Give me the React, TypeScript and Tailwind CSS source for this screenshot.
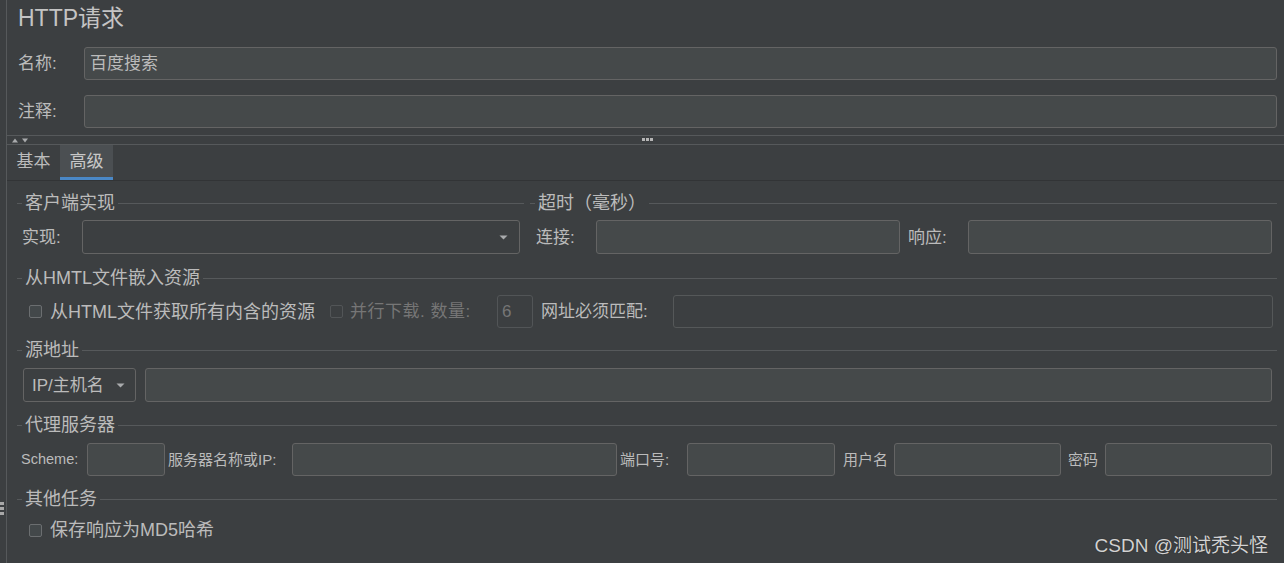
import React from "react";

const FONT = "font-['Liberation_Sans','Noto_Sans_CJK_SC',sans-serif]";

function Field({ className = "" }: { className?: string }) {
  return <div className={"h-full rounded-[3px] border border-[#646464] bg-[#45494a] " + className} />;
}

function Arrow() {
  return (
    <svg width="9" height="5" viewBox="0 0 9 5" className="shrink-0">
      <path d="M0.5 0.5 L8.5 0.5 L4.5 4.5 Z" fill="#a9abad" />
    </svg>
  );
}

function Check({ disabled = false }: { disabled?: boolean }) {
  return (
    <div
      className={
        disabled
          ? "h-[13px] w-[13px] shrink-0 rounded-[2px] border border-[#525557] bg-[#3c3f41]"
          : "h-[13px] w-[13px] shrink-0 rounded-[2px] border border-[#6b6e70] bg-[#43484a]"
      }
    />
  );
}

function Header({ title }: { title: string }) {
  return (
    <div className="flex h-[20px] items-center">
      <div className="h-px w-[5px] bg-[#56595b]" />
      <span className="px-[3px] text-[18px] leading-none text-[#bbbbbb]">{title}</span>
      <div className="h-px flex-1 bg-[#56595b]" />
    </div>
  );
}

export default function App() {
  return (
    <div className={"relative flex h-[563px] w-full overflow-hidden bg-[#3c3f41] text-[#bbbbbb] " + FONT}>
      {/* left strip */}
      <div className="relative w-[6px] shrink-0">
        <div className="absolute left-0 top-[502px] flex flex-col gap-[2px]">
          <div className="h-[3px] w-[4px] bg-[#a8a8a8]" />
          <div className="h-[3px] w-[4px] bg-[#a8a8a8]" />
          <div className="h-[3px] w-[4px] bg-[#a8a8a8]" />
        </div>
      </div>
      <div className="w-px shrink-0 bg-[#56595b]" />

      {/* main */}
      <div className="flex min-w-0 flex-1 flex-col">
        <div className="flex h-[36px] items-center pl-[11px] text-[23px] leading-none text-[#c4c4c4]">HTTP请求</div>

        <div className="mt-[11px] flex h-[33px] items-center pl-[11px] pr-[7px]">
          <span className="w-[66px] text-[17px] leading-none">名称:</span>
          <div className="flex h-full flex-1 items-center rounded-[3px] border border-[#646464] bg-[#45494a] pl-[5px] text-[17px] leading-none">
            百度搜索
          </div>
        </div>

        <div className="mt-[15px] flex h-[33px] items-center pl-[11px] pr-[7px]">
          <span className="w-[66px] text-[17px] leading-none">注释:</span>
          <Field className="flex-1" />
        </div>

        {/* splitter */}
        <div className="mt-[7px] h-px bg-[#56595b]" />
        <div className="relative flex h-[8px] items-center gap-[4px] pl-[5px]">
          <svg width="6" height="5" viewBox="0 0 6 5">
            <path d="M0 4.5 L6 4.5 L3 0.5 Z" fill="#a9abad" />
          </svg>
          <svg width="6" height="5" viewBox="0 0 6 5">
            <path d="M0 0.5 L6 0.5 L3 4.5 Z" fill="#a9abad" />
          </svg>
          <div className="absolute left-[635px] top-[2px] flex gap-[1px]">
            <div className="h-[3px] w-[3px] bg-[#b5b5b5]" />
            <div className="h-[3px] w-[3px] bg-[#b5b5b5]" />
            <div className="h-[3px] w-[3px] bg-[#b5b5b5]" />
          </div>
        </div>
        <div className="h-px bg-[#56595b]" />

        {/* tabs */}
        <div className="flex h-[35px]">
          <div className="flex w-[53px] items-center justify-center pb-[2px] text-[17px] leading-none">基本</div>
          <div className="flex w-[53px] items-center justify-center border-b-[3px] border-[#4a88c7] bg-[#4b4f52] text-[17px] leading-none text-[#c8c8c8]">
            高级
          </div>
        </div>
        <div className="h-px bg-[#323436]" />

        {/* content */}
        <div className="flex flex-col pl-[10px] pr-[7px]">
          <div className="mt-[12px] flex gap-[6px]">
            <div className="flex w-[507px] flex-col">
              <Header title="客户端实现" />
              <div className="mt-[7px] flex h-[34px] items-center pl-[5px]">
                <span className="w-[60px] text-[17px] leading-none">实现:</span>
                <div className="flex h-full w-[438px] items-center justify-end rounded-[3px] border border-[#646464] bg-[#3c3f41] pr-[11px]">
                  <Arrow />
                </div>
              </div>
            </div>
            <div className="flex flex-1 flex-col">
              <Header title="超时（毫秒）" />
              <div className="mt-[7px] flex h-[34px] items-center pl-[6px]">
                <span className="w-[60px] text-[17px] leading-none">连接:</span>
                <Field className="w-[304px]" />
                <span className="ml-[8px] w-[60px] text-[17px] leading-none">响应:</span>
                <Field className="w-[304px]" />
              </div>
            </div>
          </div>

          <div className="mt-[14px]">
            <Header title="从HMTL文件嵌入资源" />
          </div>
          <div className="mt-[7px] flex h-[33px] items-center pl-[12px]">
            <div className="flex w-[301px] items-center gap-[8px]">
              <Check />
              <span className="whitespace-nowrap text-[18px] leading-none">从HTML文件获取所有内含的资源</span>
            </div>
            <div className="flex w-[167px] items-center gap-[7px]">
              <Check disabled />
              <span className="whitespace-nowrap text-[17px] leading-none tracking-[0.5px] text-[#767676]">并行下载. 数量:</span>
            </div>
            <div className="flex h-full w-[36px] items-center rounded-[3px] border border-[#525557] pl-[4px] text-[17px] leading-none text-[#767676]">
              6
            </div>
            <span className="ml-[8px] w-[132px] whitespace-nowrap text-[17px] leading-none">网址必须匹配:</span>
            <div className="h-full w-[600px] rounded-[3px] border border-[#555859] bg-[#3c3f41]" />
          </div>

          <div className="mt-[12px]">
            <Header title="源地址" />
          </div>
          <div className="mt-[8px] flex h-[34px] items-center pl-[6px]">
            <div className="flex h-full w-[113px] items-center justify-between rounded-[3px] border border-[#646464] bg-[#3c3f41] pl-[8px] pr-[10px]">
              <span className="text-[17px] leading-none">IP/主机名</span>
              <Arrow />
            </div>
            <Field className="ml-[9px] w-[1127px]" />
          </div>

          <div className="mt-[13px]">
            <Header title="代理服务器" />
          </div>
          <div className="mt-[8px] flex h-[33px] items-center pl-[4px] text-[15px] leading-none">
            <span className="w-[66px] text-[14.5px]">Scheme:</span>
            <Field className="w-[78px]" />
            <span className="ml-[3px] w-[124px] whitespace-nowrap">服务器名称或IP:</span>
            <Field className="w-[325px]" />
            <span className="ml-[3px] w-[67px] whitespace-nowrap">端口号:</span>
            <Field className="w-[148px]" />
            <span className="ml-[8px] w-[51px] whitespace-nowrap">用户名</span>
            <Field className="w-[167px]" />
            <span className="ml-[7px] w-[37px] whitespace-nowrap">密码</span>
            <Field className="w-[167px]" />
          </div>

          <div className="mt-[13px]">
            <Header title="其他任务" />
          </div>
          <div className="mt-[11px] flex h-[20px] items-center gap-[8px] pl-[12px]">
            <Check />
            <span className="whitespace-nowrap text-[18px] leading-none">保存响应为MD5哈希</span>
          </div>
        </div>
      </div>

      <div className="absolute bottom-[8px] right-[16px] text-[19px] leading-none text-[#d2d2d2] [text-shadow:0_0_1px_#222]">
        CSDN @测试秃头怪
      </div>
    </div>
  );
}
